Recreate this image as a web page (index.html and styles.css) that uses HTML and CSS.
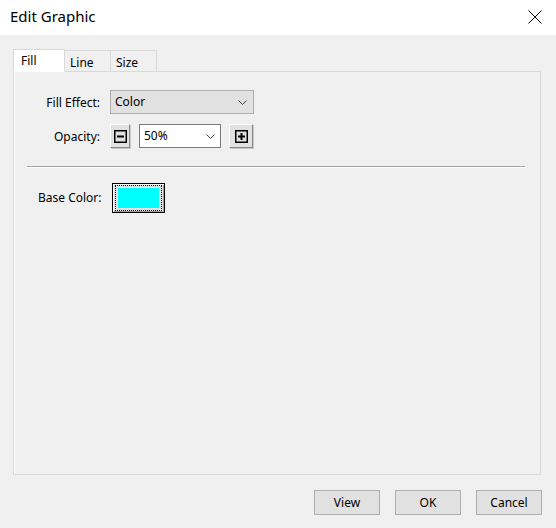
FILE: index.html
```html
<!DOCTYPE html>
<html>
<head>
<meta charset="utf-8">
<link rel="stylesheet" href="styles.css">
</head>
<body>
<div class="dialog">
  <div class="titlebar">
    <span class="title">Edit Graphic</span>
    <svg class="close" width="14" height="14" viewBox="0 0 14 14"><path d="M0.5 0.5 L13.5 13.5 M13.5 0.5 L0.5 13.5" stroke="#000" stroke-width="1" fill="none"/></svg>
  </div>
  <div class="body">
    <div class="tabs">
      <div class="tab active">Fill</div>
      <div class="tab">Line</div>
      <div class="tab">Size</div>
    </div>
    <div class="panel">
      <div class="form">
        <label class="lbl">Fill Effect:</label>
        <div class="select">
          <span>Color</span>
          <svg class="chev" width="9" height="5" viewBox="0 0 9 5"><path d="M0.5 0.5 L4.5 4.5 L8.5 0.5" stroke="#444" stroke-width="1" fill="none"/></svg>
        </div>
        <label class="lbl">Opacity:</label>
        <div class="opacity">
          <div class="sbtn">
            <svg width="13" height="13" viewBox="0 0 13 13"><rect x="0.75" y="0.75" width="11.5" height="11.5" fill="none" stroke="#000" stroke-width="1.5"/><rect x="3" y="5.5" width="7" height="2" fill="#000"/></svg>
          </div>
          <div class="combo">
            <span>50%</span>
            <svg class="chev" width="9" height="5" viewBox="0 0 9 5"><path d="M0.5 0.5 L4.5 4.5 L8.5 0.5" stroke="#444" stroke-width="1" fill="none"/></svg>
          </div>
          <div class="sbtn plus">
            <svg width="13" height="13" viewBox="0 0 13 13"><rect x="0.75" y="0.75" width="11.5" height="11.5" fill="none" stroke="#000" stroke-width="1.5"/><rect x="3" y="5.5" width="7" height="2" fill="#000"/><rect x="5.5" y="3" width="2" height="7" fill="#000"/></svg>
          </div>
        </div>
      </div>
      <div class="sep"></div>
      <div class="baserow">
        <label class="blbl">Base Color:</label>
        <div class="colorbtn"><div class="focus"><div class="swatch"></div></div></div>
      </div>
    </div>
    <div class="footer">
      <button class="btn">View</button>
      <button class="btn">OK</button>
      <button class="btn">Cancel</button>
    </div>
  </div>
</div>
</body>
</html>
```
FILE: styles.css
```css
* { box-sizing: border-box; }
html, body { margin: 0; padding: 0; }
body {
  width: 556px;
  height: 528px;
  overflow: hidden;
  font-family: "Noto Sans", "Liberation Sans", sans-serif;
  font-size: 12px;
  color: #000;
  background: #f0f0f0;
}
.dialog { width: 556px; height: 528px; display: flex; flex-direction: column; }
.titlebar {
  height: 35px;
  background: #fff;
  display: flex;
  align-items: center;
  justify-content: space-between;
  padding: 0 14px 0 10px;
}
.title { font-size: 15px; position: relative; top: -2px; }
.close { display: block; position: relative; top: -1px; }
.body { flex: 1; padding: 13px 15px 0 13px; display: flex; flex-direction: column; }
.tabs { display: flex; align-items: flex-end; height: 23px; }
.tab {
  height: 21px;
  padding: 0 0 0 5px;
  line-height: 21px;
  border: 1px solid #d9d9d9;
  border-bottom: none;
  background: #f0f0f0;
  margin-left: -1px;
  width: 47px;
  padding-top: 1px;
}
.tab:nth-child(3) { width: 47px; }
.tab.active {
  height: 23px;
  width: 52px;
  background: #fff;
  margin-left: 0;
  padding-left: 7px;
  padding-top: 0;
  line-height: 22px;
  position: relative;
  z-index: 1;
  border-bottom: 1px solid #fff;
  margin-bottom: -1px;
}
.panel {
  height: 404px;
  border: 1px solid #d9d9d9;
  box-shadow: inset 1px 0 0 #fff;
  padding-top: 18px;
}
.form {
  display: grid;
  grid-template-columns: 86px auto;
  column-gap: 10px;
  row-gap: 10px;
  align-items: center;
}
.lbl { text-align: right; }
.select {
  width: 144px;
  height: 24px;
  background: #e1e1e1;
  border: 1px solid #adadad;
  display: flex;
  align-items: center;
  justify-content: space-between;
  padding: 0 6px 0 4px;
}
.select span { position: relative; top: -1px; }
.opacity { display: flex; align-items: center; }
.sbtn {
  width: 20px;
  height: 24px;
  background: #e1e1e1;
  border: 1px solid;
  border-color: #fff #8a8a8a #8a8a8a #fff;
  box-shadow: 1px 1px 0 #c8c8c8;
  display: flex;
  align-items: center;
  justify-content: center;
}
.sbtn svg { display: block; }
.sbtn.plus { margin-left: 8px; width: 24px; }
.combo {
  margin-left: 9px;
  width: 82px;
  height: 24px;
  background: #fff;
  border: 1px solid #7a7a7a;
  display: flex;
  align-items: center;
  justify-content: space-between;
  padding: 0 5px 0 4px;
}
.combo span { position: relative; top: -1px; }
.chev { display: block; }
.sep {
  margin: 18px 15px 0 13px;
  height: 2px;
  border-top: 1px solid #a0a0a0;
  border-bottom: 1px solid #fff;
}
.baserow { display: flex; align-items: center; margin-top: 15px; padding-left: 24px; }
.blbl { margin-right: 10px; position: relative; top: -1px; }
.colorbtn {
  width: 53px;
  height: 30px;
  border: 1px solid #000;
  background: #e1e1e1;
  box-shadow: inset 1px 1px 0 #fff, inset -1px -1px 0 #a0a0a0;
  padding: 1px 2px;
}
.focus {
  width: 100%;
  height: 100%;
  border: 1px dotted #000;
  padding: 2px;
}
.swatch { width: 100%; height: 100%; background: #00ffff; }
.footer {
  display: flex;
  justify-content: flex-end;
  gap: 15px;
  margin-top: 15px;
  margin-right: -1px;
}
.btn {
  width: 66px;
  height: 25px;
  background: #e1e1e1;
  border: 1px solid #adadad;
  font-family: "Noto Sans", "Liberation Sans", sans-serif;
  font-size: 12px;
  color: #000;
  padding: 0;
  padding-bottom: 1px;
}
```
